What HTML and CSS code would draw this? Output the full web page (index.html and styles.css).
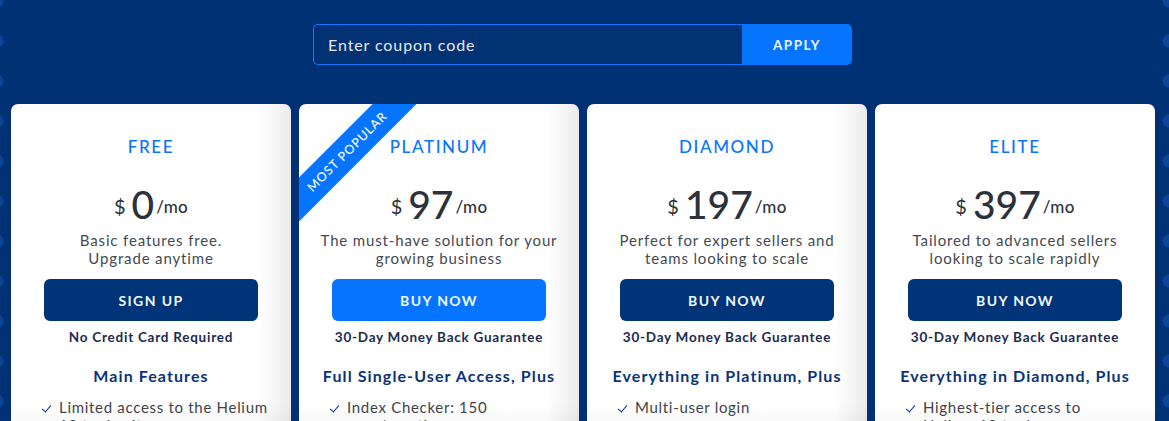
FILE: index.html
```html
<!DOCTYPE html>
<html lang="en">
<head>
    <meta charset="UTF-8">
    <meta name="viewport" content="width=device-width, initial-scale=1.0">
    <title>Pricing</title>
    <link rel="stylesheet" href="styles.css">
</head>
<body>
    <div class="page">
        <div class="coupon">
            <input type="text" class="coupon-input" placeholder="Enter coupon code">
            <button class="coupon-btn">APPLY</button>
        </div>

        <div class="plans">
            <div class="card shaded">
                <h3 class="plan-name">FREE</h3>
                <div class="price"><span class="cur">$</span><span class="amount">0</span><span class="per">/mo</span></div>
                <p class="desc">Basic features free.<br>Upgrade anytime</p>
                <button class="btn dark">SIGN UP</button>
                <p class="note">No Credit Card Required</p>
                <h4 class="feat-title">Main Features</h4>
                <ul class="features">
                    <li>Limited access to the Helium 10 tool suite</li>
                </ul>
            </div>

            <div class="card shaded">
                <div class="ribbon">MOST POPULAR</div>
                <h3 class="plan-name">PLATINUM</h3>
                <div class="price"><span class="cur">$</span><span class="amount">97</span><span class="per">/mo</span></div>
                <p class="desc">The must-have solution for your<br>growing business</p>
                <button class="btn bright">BUY NOW</button>
                <p class="note">30-Day Money Back Guarantee</p>
                <h4 class="feat-title">Full Single-User Access, Plus</h4>
                <ul class="features">
                    <li>Index Checker: 150 uses/month</li>
                </ul>
            </div>

            <div class="card shaded">
                <h3 class="plan-name">DIAMOND</h3>
                <div class="price"><span class="cur">$</span><span class="amount">197</span><span class="per">/mo</span></div>
                <p class="desc">Perfect for expert sellers and<br>teams looking to scale</p>
                <button class="btn dark">BUY NOW</button>
                <p class="note">30-Day Money Back Guarantee</p>
                <h4 class="feat-title">Everything in Platinum, Plus</h4>
                <ul class="features">
                    <li>Multi-user login</li>
                    <li>Index Checker: 250 uses/month</li>
                </ul>
            </div>

            <div class="card">
                <h3 class="plan-name">ELITE</h3>
                <div class="price"><span class="cur">$</span><span class="amount">397</span><span class="per">/mo</span></div>
                <p class="desc">Tailored to advanced sellers<br>looking to scale rapidly</p>
                <button class="btn dark">BUY NOW</button>
                <p class="note">30-Day Money Back Guarantee</p>
                <h4 class="feat-title">Everything in Diamond, Plus</h4>
                <ul class="features">
                    <li>Highest-tier access to Helium 10 tools</li>
                </ul>
            </div>
        </div>
    </div>
</body>
</html>
```

FILE: styles.css
```css
body { margin: 0; padding: 0; font-family: Lato, "Open Sans", sans-serif; background: #013175; overflow: hidden; }
.page {
    height: 421px; overflow: hidden; box-sizing: border-box; padding-top: 24px;
    background:
        radial-gradient(circle, #0b4597 6px, transparent 7px),
        radial-gradient(circle, #0b4597 6px, transparent 7px),
        #013175;
    background-repeat: repeat-y, repeat-y, no-repeat;
    background-size: 16px 40px, 16px 40px, auto;
    background-position: right -8px top 61px, left -11px top 61px, 0 0;
}

.coupon { display: flex; width: 539px; height: 41px; margin: 0 auto; position: relative; left: -2px; }
.coupon-input {
    flex: 1; box-sizing: border-box; height: 41px; margin: 0; padding: 0 14px;
    border: 1px solid #1674ff; border-right: none; border-radius: 5px 0 0 5px;
    background: #023174; color: #fff; font-family: Lato, sans-serif; font-size: 16px; letter-spacing: 0.9px; outline: none;
}
.coupon-input::placeholder { color: #e4e8f0; }
.coupon-btn {
    width: 110px; height: 41px; border: none; border-radius: 0 5px 5px 0; margin: 0;
    background: #0575ff; color: #eef2f8; font-family: Lato, sans-serif; font-weight: 700; font-size: 13.5px; letter-spacing: 1.5px;
}

.plans { display: flex; gap: 8px; padding-left: 11px; margin-top: 39px; }
.card {
    position: relative; overflow: hidden; width: 280px; flex: none; height: 360px;
    background: linear-gradient(#fff 0, #fff 300px, #f3f3f3 330px);
    border-radius: 7px; text-align: center; box-sizing: border-box; padding-top: 33px;
}
.card.shaded {
    background:
        linear-gradient(to right, rgba(255,255,255,0) calc(100% - 32px), rgba(0,0,0,0.08)),
        linear-gradient(#fff 0, #fff 300px, #f3f3f3 330px);
}

.ribbon {
    position: absolute; left: -52px; top: 32px; width: 200px; height: 31px; line-height: 31px;
    transform: rotate(-45deg); background: #0575ff; color: #fff;
    font-size: 12.5px; letter-spacing: 0.9px; font-weight: 500;
}

.plan-name { margin: 0; font-size: 17px; font-weight: 500; letter-spacing: 1.6px; color: #0a74fd; line-height: 20px; }

.price { display: flex; justify-content: center; align-items: center; margin-top: 25px; color: #2d3139; height: 44px; }
.cur { font-size: 20px; margin-right: 6px; padding-top: 4px; }
.amount { font-size: 39px; font-weight: 500; line-height: 44px; margin-right: 2px; }
.per { font-size: 17px; font-weight: 500; letter-spacing: 0.3px; padding-top: 5px; }

.desc { margin: 5px 0 0; font-size: 15px; line-height: 18px; color: #444a52; letter-spacing: 0.85px; }

.btn {
    display: block; width: 214px; height: 42px; margin: 12px auto 0; border: none; border-radius: 6px;
    color: #f2f5fa; font-family: Lato, sans-serif; font-size: 14px; font-weight: 700; letter-spacing: 1.4px;
}
.btn.dark { background: #003478; }
.btn.bright { background: #0575ff; }

.note { margin: 8px 0 0; font-size: 13.5px; line-height: 16px; font-weight: 700; color: #1d2b4d; letter-spacing: 0.75px; }

.feat-title { margin: 21px 0 0; font-size: 16px; line-height: 20px; font-weight: 700; color: #0b3378; letter-spacing: 1.1px; }

.features { list-style: none; margin: 12px 0 0; padding: 0 21px 0 48px; text-align: left; }
.features li { position: relative; font-size: 15px; line-height: 18px; color: #3e434b; margin-bottom: 4px; letter-spacing: 0.7px; }
.features li::before {
    content: ""; position: absolute; left: -15px; top: 5px; width: 4px; height: 8px;
    border-right: 1.3px solid #0b3378; border-bottom: 1.3px solid #0b3378; transform: rotate(40deg);
}
```
